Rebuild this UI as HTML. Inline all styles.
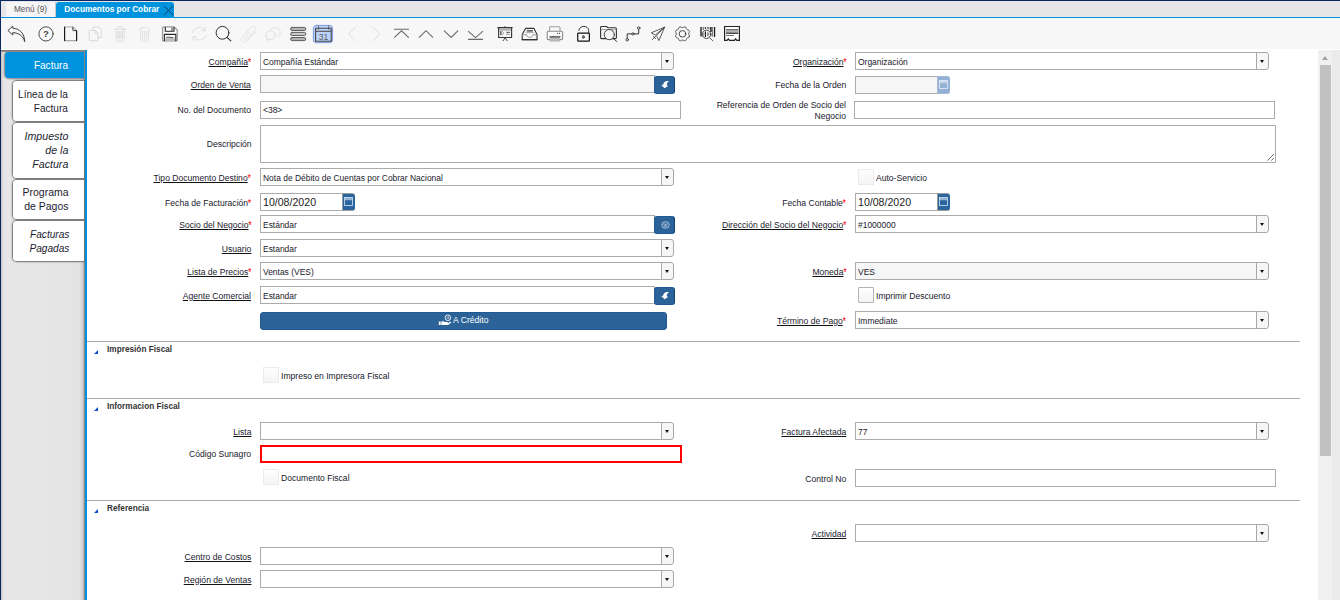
<!DOCTYPE html>
<html>
<head>
<meta charset="utf-8">
<title>Documentos por Cobrar</title>
<style>
*{box-sizing:border-box;margin:0;padding:0}
html,body{width:1340px;height:600px;overflow:hidden;background:#fff}
body{font-family:"Liberation Sans",sans-serif;font-size:9px;color:#333;position:relative}
.abs{position:absolute}
#topline{left:0;top:0;width:1340px;height:1px;background:#0b2763}
#leftline{left:0;top:0;width:1px;height:600px;background:#0b2763}
#tabbar{left:1px;top:1px;width:1339px;height:16px;background:#e6e6e6}
#tabblue{left:1px;top:17px;width:1339px;height:1px;background:#0093dd}
#tab1{left:6px;top:2px;width:50px;height:15px;background:#f5f5f5;border-right:1px solid #c8c8c8;font-size:8.25px;color:#555;text-align:center;line-height:15px}
#tab2{left:56px;top:2px;width:118px;height:16px;background:#0093dd;border-radius:3px 3px 0 0;color:#fff;font-weight:bold;font-size:8.25px;line-height:15px;padding-left:8.3px;white-space:nowrap}
#toolbar{left:1px;top:18px;width:1339px;height:31px;background:#f7f7f7}
#side{left:1px;top:50px;width:84px;height:550px;background:linear-gradient(to right,#bcbcbc 0,#dedede 1.5px,#e7e7e7 4px,#e4e4e4 78px,#d6d6d6 81px,#b0b0b0 83px)}
#sideblue{left:85px;top:50px;width:2px;height:550px;background:#0093dd}
.stab{position:absolute;left:13px;width:71px;background:#fff;border-radius:4px 0 0 4px;font-size:11.5px;color:#1c1c30;text-align:right;line-height:14px;display:flex;align-items:center;justify-content:flex-end;padding-right:16px}
.stab.sh{box-shadow:0 0 1.5px 1px #6c6c6c}
.stab.sel{left:5px;width:79px;background:#0093dd;color:#fff;border-radius:4px 0 0 4px}
.stab.sel.sh{box-shadow:0 0 2px 1px #8a8080}
.stab.it{font-style:italic}
.st{transform:scaleX(0.875);transform-origin:right center;white-space:nowrap}
#content{left:87px;top:50px;width:1231px;height:550px;background:#fff}
#sbtrack{left:1318px;top:50px;width:14px;height:550px;background:#f0f0f0}
#sbright{left:1332px;top:50px;width:8px;height:550px;background:#ebebeb}
#sbthumb{left:1320px;top:65px;width:11px;height:391px;background:#c1c1c1}
#sbarrow{left:1321.7px;top:55.7px;width:0;height:0;border-left:3.8px solid transparent;border-right:3.8px solid transparent;border-bottom:4.3px solid #a0a0a0}
.lbl{position:absolute;text-align:right;white-space:nowrap;color:#20202c;font-size:9.7px;line-height:12px;transform:scaleX(0.886);transform-origin:right center;margin-top:0.6px}
.lbl u{text-decoration:underline;text-underline-offset:1px;text-decoration-thickness:1px;text-decoration-color:#111}
.req{color:#f00;font-size:10px;line-height:9px;position:relative;top:1.4px;margin-left:-0.3px}
.inp{position:absolute;height:18px;border:1px solid #ababab;background:#fff;font-size:9.7px;line-height:16px;padding-left:2px;color:#333;white-space:nowrap;overflow:hidden}
.v{display:inline-block;transform:scaleX(0.872);transform-origin:left center;position:relative;top:0.9px;color:#20202c}
.ro{background:#f6f6f6}
.cbb{position:absolute;width:13px;height:18px;border:1px solid #a8a8a8;border-radius:0 3px 3px 0;background:#f6f6f6}
.cbb:after{content:"";position:absolute;left:2.7px;top:6.8px;border-left:2.8px solid transparent;border-right:2.8px solid transparent;border-top:3.2px solid #111}
.bbtn{position:absolute;background:#2b6399;border-radius:3px;border:1px solid #1f5a94;border-right-color:#0d4478}
.dbtn{position:absolute;width:13px;height:18px;background:#2b659e;border:1px solid #999;border-right:none;border-radius:0 3px 3px 0}
.dv{position:absolute;font-size:11px;line-height:18px;color:#222;white-space:nowrap;transform:scaleX(0.963);transform-origin:left center}
.acr{position:absolute;color:#fff;font-size:9.7px;line-height:12px;white-space:nowrap;transform:scaleX(0.89);transform-origin:left center}
.sep{position:absolute;left:87px;width:1213px;height:1px;background:#a9a9a9}
.sec{position:absolute;left:107px;font-weight:bold;font-size:8.25px;color:#333;line-height:11px;white-space:nowrap}
.tri{position:absolute;left:94px;width:0;height:0;border-left:4px solid transparent;border-bottom:4.5px solid #0a4ad0}
.chk{position:absolute;width:16px;height:16px;border:1px solid #ebebeb;background:linear-gradient(#fefefe,#f4f4f4)}
.chk.en{border-color:#b4b4b4;background:linear-gradient(#fff,#f3f3f3);border-radius:1px}
.ctx{position:absolute;font-size:9.7px;line-height:12px;color:#20202c;white-space:nowrap;transform:scaleX(0.884);transform-origin:left center;margin-top:0.8px}
</style>
</head>
<body>
<div class="abs" id="tabbar"></div>
<div class="abs" id="tabblue"></div>
<div class="abs" id="tab1">Menú (9)</div>
<div class="abs" id="tab2">Documentos por Cobrar</div>
<div class="abs" id="toolbar"></div>
<div class="abs" id="side"></div>
<div class="abs" id="content"></div>
<div class="abs" id="sideblue"></div>
<div class="abs" id="sbtrack"></div>
<div class="abs" id="sbright"></div>
<div class="abs" id="sbthumb"></div>
<div class="abs" id="sbarrow"></div>
<div class="abs" id="topline"></div>
<div class="abs" id="leftline"></div>
<!--SIDETABS-->
<div class="abs" style="left:0;top:50px;width:85px;height:550px;overflow:hidden"><div class="abs" style="left:0;top:-50px">
<div class="abs" style="left:1px;top:50px;width:84px;height:2px;background:linear-gradient(#7c7878,#9a9090)"></div>
<div class="abs" style="left:84px;top:50px;width:1px;height:550px;background:#8a8a8a"></div>
<div class="stab sel sh" style="top:52px;height:26px"></div>
<div class="stab sh" style="top:81px;height:40px"></div>
<div class="stab it sh" style="top:123px;height:54.5px"></div>
<div class="stab sh" style="top:180px;height:38.5px"></div>
<div class="stab it sh" style="top:221px;height:39.8px"></div>
<div class="stab sel" style="top:52px;height:26px;padding-right:16px"><div class="st" style="transform:scaleX(0.875)">Factura</div></div>
<div class="stab" style="top:81px;height:40px;padding-right:16px"><div class="st" style="transform:scaleX(0.875)">Línea de la<br>Factura</div></div>
<div class="stab it" style="top:123px;height:54.5px;padding-right:15.5px"><div class="st" style="transform:scaleX(0.925)">Impuesto<br>de la<br>Factura</div></div>
<div class="stab" style="top:180px;height:38.5px;padding-right:16px"><div class="st" style="transform:scaleX(0.91)">Programa<br>de Pagos</div></div>
<div class="stab it" style="top:221px;height:39.8px;padding-right:14.8px"><div class="st" style="transform:scaleX(0.88)">Facturas<br>Pagadas</div></div>
</div></div>
<!--/SIDETABS-->
<!--FORM-->
<div class="lbl" style="right:1088.7px;top:55px"><u>Compañía</u><span class="req">*</span></div>
<div class="inp" style="left:260px;top:52px;width:402px"><span class="v">Compañía Estándar</span></div>
<div class="cbb" style="left:661px;top:52px"></div>
<div class="lbl" style="right:493.70000000000005px;top:55px"><u>Organización</u><span class="req">*</span></div>
<div class="inp" style="left:855px;top:52px;width:402px"><span class="v">Organización</span></div>
<div class="cbb" style="left:1256px;top:52px"></div>
<div class="lbl" style="right:1088.7px;top:78px"><u>Orden de Venta</u></div>
<div class="inp ro" style="left:260px;top:75px;width:395px;"></div>
<div class="bbtn" style="left:654px;top:76px;width:21px;height:18px"><svg width="9" height="9" viewBox="0 0 9 9" style="position:absolute;left:6px;top:4px"><path d="M8 0.1C5.8 -0.2 3.7 0.4 2.8 1.8C2.3 2.6 2.2 3.2 2.2 3.7L0.2 4.1L3.5 7.3L7.1 4.9L5.8 4.3C5.6 3 6.3 1.4 8 0.1Z" fill="#fff"/></svg></div>
<div class="lbl" style="right:493.70000000000005px;top:78px">Fecha de la Orden</div>
<div class="inp ro" style="left:855px;top:76px;width:83px;"></div>
<div class="dbtn" style="left:937px;top:76px;background:#92b1d5;border-color:#a4b9d2"><svg width="9" height="9" viewBox="0 0 9 9" style="position:absolute;left:1px;top:3px"><rect x="0.45" y="0.5" width="8.1" height="8" fill="none" stroke="#e6eef8" stroke-width="0.8"/><path d="M0.5 1.1H8.500M0.500 2.700H8.500" stroke="#e6eef8" stroke-width="0.7"/><path d="M1 1.800H8" stroke="#e6eef8" stroke-width="0.800" stroke-dasharray="1.300 1"/></svg></div>
<div class="lbl" style="right:1088.7px;top:103.2px">No. del Documento</div>
<div class="inp" style="left:260px;top:101px;width:421px;"><span class="v"><span style="position:relative;top:-0.8px">&lt;38&gt;</span></span></div>
<div class="lbl" style="right:493.70000000000005px;top:98.1px;line-height:11px">Referencia de Orden de Socio del<br>Negocio</div>
<div class="inp" style="left:854px;top:101px;width:421px;"></div>
<div class="lbl" style="right:1088.7px;top:137.1px">Descripción</div>
<div class="inp" style="left:260px;top:125px;width:1016px;height:38px"></div>
<svg class="abs" style="left:1266px;top:153px" width="9" height="9" viewBox="0 0 9 9"><path d="M1.3 7.6L7.7 1.2M5.3 7.6L7.7 5.2" stroke="#3c3c3c" stroke-width="0.8" fill="none"/></svg>
<div class="lbl" style="right:1088.7px;top:171px"><u>Tipo Documento Destino</u><span class="req">*</span></div>
<div class="inp" style="left:260px;top:168px;width:402px"><span class="v">Nota de Débito de Cuentas por Cobrar Nacional</span></div>
<div class="cbb" style="left:661px;top:168px"></div>
<div class="chk" style="left:858px;top:169px"></div>
<div class="ctx" style="left:876px;top:171px">Auto-Servicio</div>
<div class="lbl" style="right:1088.7px;top:196px">Fecha de Facturación<span class="req">*</span></div>
<div class="inp" style="left:260px;top:193px;width:83px;"></div>
<div class="dv" style="left:263px;top:193px">10/08/2020</div>
<div class="dbtn" style="left:342px;top:193px"><svg width="9" height="9" viewBox="0 0 9 9" style="position:absolute;left:1px;top:3px"><rect x="0.45" y="0.5" width="8.1" height="8" fill="none" stroke="#d3e4f6" stroke-width="0.8"/><path d="M0.5 1.1H8.500M0.500 2.700H8.500" stroke="#d3e4f6" stroke-width="0.7"/><path d="M1 1.800H8" stroke="#d3e4f6" stroke-width="0.800" stroke-dasharray="1.300 1"/></svg></div>
<div class="lbl" style="right:493.70000000000005px;top:196px">Fecha Contable<span class="req">*</span></div>
<div class="inp" style="left:855px;top:193px;width:83px;"></div>
<div class="dv" style="left:858px;top:193px">10/08/2020</div>
<div class="dbtn" style="left:937px;top:193px"><svg width="9" height="9" viewBox="0 0 9 9" style="position:absolute;left:1px;top:3px"><rect x="0.45" y="0.5" width="8.1" height="8" fill="none" stroke="#d3e4f6" stroke-width="0.8"/><path d="M0.5 1.1H8.500M0.500 2.700H8.500" stroke="#d3e4f6" stroke-width="0.7"/><path d="M1 1.800H8" stroke="#d3e4f6" stroke-width="0.800" stroke-dasharray="1.300 1"/></svg></div>
<div class="lbl" style="right:1088.7px;top:218px"><u>Socio del Negocio</u><span class="req">*</span></div>
<div class="inp" style="left:260px;top:215px;width:395px;"><span class="v">Estándar</span></div>
<div class="bbtn" style="left:654px;top:216px;width:21px;height:18px"><svg width="9" height="8" viewBox="0 0 9 8" style="position:absolute;left:5.5px;top:3.5px"><ellipse cx="4.5" cy="4" rx="3.7" ry="3.3" fill="none" stroke="#b9cee6" stroke-width="0.9"/><path d="M3.1 2.4v2a1.4 1.3 0 0 0 2.8 0V2.4M4.5 2.5v2.6" fill="none" stroke="#b9cee6" stroke-width="0.8"/></svg></div>
<div class="lbl" style="right:493.70000000000005px;top:218px"><u>Dirección del Socio del Negocio</u><span class="req">*</span></div>
<div class="inp" style="left:855px;top:215px;width:402px"><span class="v">#1000000</span></div>
<div class="cbb" style="left:1256px;top:215px"></div>
<div class="lbl" style="right:1088.7px;top:242px"><u>Usuario</u></div>
<div class="inp" style="left:260px;top:239px;width:402px"><span class="v">Estandar</span></div>
<div class="cbb" style="left:661px;top:239px"></div>
<div class="lbl" style="right:1088.7px;top:265px"><u>Lista de Precios</u><span class="req">*</span></div>
<div class="inp" style="left:260px;top:262px;width:402px"><span class="v">Ventas (VES)</span></div>
<div class="cbb" style="left:661px;top:262px"></div>
<div class="lbl" style="right:493.70000000000005px;top:265px"><u>Moneda</u><span class="req">*</span></div>
<div class="inp ro" style="left:855px;top:262px;width:402px"><span class="v">VES</span></div>
<div class="cbb" style="left:1256px;top:262px"></div>
<div class="lbl" style="right:1088.7px;top:289px"><u>Agente Comercial</u></div>
<div class="inp" style="left:260px;top:286px;width:395px;"><span class="v">Estandar</span></div>
<div class="bbtn" style="left:654px;top:287px;width:21px;height:18px"><svg width="9" height="9" viewBox="0 0 9 9" style="position:absolute;left:6px;top:4px"><path d="M8 0.1C5.8 -0.2 3.7 0.4 2.8 1.8C2.3 2.6 2.2 3.2 2.2 3.7L0.2 4.1L3.5 7.3L7.1 4.9L5.8 4.3C5.6 3 6.3 1.4 8 0.1Z" fill="#fff"/></svg></div>
<div class="chk en" style="left:858px;top:287px"></div>
<div class="ctx" style="left:876px;top:289px">Imprimir Descuento</div>
<div class="bbtn" style="left:260px;top:312px;width:407px;height:18px;border:1px solid #1f5a94"></div>
<div class="acr" style="left:453px;top:314.2px">A Crédito</div>
<svg class="abs" style="left:438px;top:314px" width="14" height="12" viewBox="0 0 14 12"><circle cx="9.9" cy="3.8" r="2.8" fill="none" stroke="#fff" stroke-width="0.85"/><path d="M9.2 2.500v2.600M10.100 2.500c1 0 1 1.200 0 1.200c1 0 1 1.400 0 1.400" stroke="#fff" stroke-width="0.55" fill="none"/><path d="M0.800 7.400h1.900v3.600H0.800zM3.300 7.800C4.700 7.100 6 7.300 7 7.900H9.300C10 7.900 10 9.100 9.300 9.100H7.400L10 9.100L12.200 7.800C12.900 7.500 13.500 8.300 12.900 8.800L10 10.900H3.300Z" fill="#fff"/></svg>
<div class="lbl" style="right:493.70000000000005px;top:314px"><u>Término de Pago</u><span class="req">*</span></div>
<div class="inp" style="left:855px;top:311px;width:402px"><span class="v">Immediate</span></div>
<div class="cbb" style="left:1256px;top:311px"></div>
<div class="sep" style="top:341px"></div>
<div class="tri" style="top:349.5px"></div>
<div class="sec" style="top:344px">Impresión Fiscal</div>
<div class="chk" style="left:263px;top:367px"></div>
<div class="ctx" style="left:281px;top:369px">Impreso en Impresora Fiscal</div>
<div class="sep" style="top:398px"></div>
<div class="tri" style="top:406.5px"></div>
<div class="sec" style="top:401px">Informacion Fiscal</div>
<div class="lbl" style="right:1088.7px;top:425px"><u>Lista</u></div>
<div class="inp" style="left:260px;top:422px;width:402px"></div>
<div class="cbb" style="left:661px;top:422px"></div>
<div class="lbl" style="right:493.70000000000005px;top:425px"><u>Factura Afectada</u></div>
<div class="inp" style="left:855px;top:422px;width:402px"><span class="v">77</span></div>
<div class="cbb" style="left:1256px;top:422px"></div>
<div class="lbl" style="right:1088.7px;top:447.2px">Código Sunagro</div>
<div class="inp" style="left:260px;top:445px;width:422px;border:2px solid #f00"></div>
<div class="chk" style="left:263px;top:469px"></div>
<div class="ctx" style="left:281px;top:471px">Documento Fiscal</div>
<div class="lbl" style="right:493.70000000000005px;top:472px">Control No</div>
<div class="inp" style="left:855px;top:469px;width:421px;"></div>
<div class="sep" style="top:500px"></div>
<div class="tri" style="top:508.5px"></div>
<div class="sec" style="top:503px">Referencia</div>
<div class="lbl" style="right:493.70000000000005px;top:527px"><u>Actividad</u></div>
<div class="inp" style="left:855px;top:524px;width:402px"></div>
<div class="cbb" style="left:1256px;top:524px"></div>
<div class="lbl" style="right:1088.7px;top:550px"><u>Centro de Costos</u></div>
<div class="inp" style="left:260px;top:547px;width:402px"></div>
<div class="cbb" style="left:661px;top:547px"></div>
<div class="lbl" style="right:1088.7px;top:573px"><u>Región de Ventas</u></div>
<div class="inp" style="left:260px;top:570px;width:402px"></div>
<div class="cbb" style="left:661px;top:570px"></div>
<!--/FORM-->
<!--ICONS-->
<svg class="abs" style="left:0;top:0" width="760" height="50" viewBox="0 0 760 50" fill="none" stroke-linecap="round" stroke-linejoin="round">
<!-- tab close X -->
<path d="M164.3 6.2L172.8 14.8M172.8 6.2L164.3 14.8" stroke="#0b3a5e" stroke-width="0.9"/>
<!-- undo -->
<path d="M8.2 30.2L12.8 26.1V28.2C19.6 28.6 24.6 33.4 24.7 41.6C23 36 19 33 12.8 32.6V34.6Z" stroke="#2a2a2a" stroke-width="0.9"/>
<!-- help -->
<circle cx="46" cy="33.9" r="7.1" stroke="#3a3a3a" stroke-width="0.9"/>
<text x="46" y="37.200" font-family="Liberation Sans, sans-serif" font-size="9.500" font-weight="bold" fill="#444" stroke="none" text-anchor="middle">?</text>
<!-- new doc -->
<path d="M64.6 27H72.6L76.6 30.8V40.6H64.6Z" stroke="#a8a8a8" stroke-width="1.100"/>
<path d="M64.6 27V40.6M76.6 30.8V40.6" stroke="#111" stroke-width="1.1"/>
<path d="M72.800 27.200V30.200C72.800 30.500 73 30.600 73.300 30.600H76.400" stroke="#333" stroke-width="0.900"/>
<!-- copy (disabled) -->
<g stroke="#d6d6d6" stroke-width="0.9">
<path d="M89.6 30.4H95.4L98 33V40.6H89.6Z"/>
<path d="M95.2 30.6V33H97.8"/>
<path d="M93 30.2V27H99L101.4 29.4V37.4H98.2"/>
</g>
<!-- trash 1 (disabled) -->
<g stroke="#dadada" stroke-width="0.9">
<path d="M114.8 29.2H125.4M117.6 29V27.2C118.6 26.2 121.6 26.2 122.6 27.2V29"/>
<path d="M115.6 29.4L116.4 40C116.6 41 117.2 41.2 118 41.2H122.2C123 41.2 123.6 41 123.8 40L124.6 29.4"/>
<path d="M117.8 31.4V38.8M119.4 31.4V38.8M120.9 31.4V38.8M122.4 31.4V38.8"/>
</g>
<!-- trash 2 (disabled) -->
<g stroke="#dedede" stroke-width="0.9">
<path d="M139.8 29.2C141 26.4 148.6 26.4 149.6 29.2"/>
<path d="M140.2 29.4L141 40C141.2 41 141.8 41.2 142.6 41.2H146.8C147.6 41.2 148.2 41 148.4 40L149.2 29.4"/>
<path d="M142.6 31V39M144.7 31V39M146.8 31V39"/>
</g>
<!-- save -->
<path d="M162.6 28C162.6 27.2 163.2 26.9 163.8 26.9H174L177.2 30V40C177.2 40.6 176.8 40.9 176.2 40.9H163.8C163 40.9 162.6 40.5 162.6 40Z" fill="#fff" stroke="#9a9a9a" stroke-width="1.3"/>
<path d="M165.3 27.4V31.2H174V27.4" stroke="#222" stroke-width="1.1"/>
<path d="M172 28V30.4" stroke="#222" stroke-width="0.9"/>
<rect x="165.4" y="37.6" width="9.6" height="3.3" fill="#bdbdbd" stroke="none"/>
<path d="M164.4 40.7V34.4H175.8V40.7" stroke="#222" stroke-width="1.1"/>
<path d="M166.6 37.2H170M170.6 37.5H172.8" stroke="#333" stroke-width="0.8"/>
<!-- refresh (disabled) -->
<g stroke="#dcdcdc" stroke-width="0.9">
<path d="M192.4 32.6C193.6 26.6 202.6 25.6 205 30.6M205.4 27.4V30.8H202"/>
<path d="M206 35C204.8 41 195.8 42 193.4 37M193 40.2V36.8H196.4"/>
</g>
<!-- search -->
<circle cx="222.5" cy="32.8" r="6.4" stroke="#333" stroke-width="1"/>
<path d="M227 37.4L230.8 40.9" stroke="#333" stroke-width="1.1"/>
<!-- paperclip (disabled) -->
<g stroke="#dedede" stroke-width="0.9">
<path d="M256 32L246.800 41C243.800 43.600 239.400 40.200 242 37L251.400 27.400C253.800 25 257.400 27.600 255.400 30.200L246.600 39C245.400 40.200 243.600 38.800 244.800 37.400L250.200 31.600"/>
</g>
<!-- chat (disabled) -->
<g stroke="#dcdcdc" stroke-width="0.9">
<ellipse cx="270.6" cy="35.2" rx="4.9" ry="4.4" fill="#f6f6f6"/>
<path d="M267.400 38.600L266.800 40.600L269 39.400"/>
<path d="M270.400 30C272.800 25.400 281.400 27.400 280.200 33.400C279.800 34.800 279 35.600 278 36.200L278.400 36.900"/>
</g>
<!-- menu bars -->
<g stroke="#505050" stroke-width="0.9">
<rect x="290.600" y="27.400" width="15.200" height="3.100" rx="1.550" fill="#b4b4b4"/>
<rect x="290.600" y="32.400" width="15.200" height="3.100" rx="1.550" fill="#cacaca"/>
<rect x="290.600" y="37.500" width="15.200" height="3.100" rx="1.550" fill="#b4b4b4"/>
</g>
<!-- calendar toggle -->
<rect x="313.400" y="25.400" width="19.200" height="17.300" rx="3" fill="#bcd4fa" stroke="#7c98e4" stroke-width="1"/>
<path d="M315.600 28.200H331.200V41.200H315.600ZM315.600 31.200H331.200" stroke="#444" stroke-width="1.100"/><path d="M318.500 26.100V29.400M328.600 26.100V29.400" stroke="#444" stroke-width="0.700"/>
<text x="323.5" y="40" font-family="Liberation Sans, sans-serif" font-size="8.6" fill="#5a5a5a" stroke="none" text-anchor="middle">31</text>
<!-- prev / next (disabled) -->
<path d="M355.400 27.200L348.800 33.900L355.400 40.900M373.100 27.200L379.700 33.900L373.100 40.900" stroke="#d9d9d9" stroke-width="0.9"/>
<!-- first/up/down/last -->
<g stroke="#6a6a6a" stroke-width="1.100" stroke-linecap="butt" stroke-linejoin="miter">
<path d="M394 29.300H409M394.200 37.600L401.500 30.800L408.800 37.600"/>
<path d="M418.900 37.600L426 30.700L433.100 37.600"/>
<path d="M444 30.700L451.100 37.400L458.100 30.700"/>
<path d="M468.100 31.200L475.500 37.600L483 31.200M468 39.400H483"/>
</g>
<!-- presentation board -->
<rect x="498.800" y="28.700" width="12.500" height="2" fill="#b0b0b0" stroke="none"/>
<path d="M497.800 27.600H512.200" stroke="#333" stroke-width="1.200"/>
<path d="M498.600 28V37.500H511.600V28" stroke="#333" stroke-width="1.100"/>
<path d="M505.100 37.800L503.100 40.700M505.100 37.800L507.100 40.700M505 26.600V27.400" stroke="#333" stroke-width="0.9"/>
<path d="M500.600 31.600V34.600M502 31.400C504.200 31.400 504.200 35 502 35ZM506.400 32.200H509.400M506.400 34.400H509.400" stroke="#999" stroke-width="0.9"/>
<path d="M500.600 31.600V34.600M507 32.600H509.400" stroke="#444" stroke-width="0.8"/>
<!-- inbox tray -->
<path d="M525.500 28.400H534L537 34.600V39.600H522.200V34.600Z" stroke="#333" stroke-width="1.100"/>
<path d="M522.400 34.800H526.600C526.600 38.200 532.800 38.200 532.800 34.800H537" stroke="#999" stroke-width="1"/>
<path d="M527.200 30.800H532.400" stroke="#333" stroke-width="1.300"/>
<path d="M526.200 32.600H533.400" stroke="#aaa" stroke-width="1"/>
<path d="M522.200 39.600H537" stroke="#333" stroke-width="1.200"/>
<!-- printer -->
<path d="M549.600 31V27.400C549.600 26.900 550 26.700 550.400 26.700H559C559.600 26.700 560 27 560 27.400V31" stroke="#a0a0a0" stroke-width="1.100"/>
<rect x="547.200" y="31.200" width="15.400" height="8.400" rx="1.400" stroke="#8a8a8a" stroke-width="1.100" fill="#fafafa"/>
<rect x="550.200" y="37.600" width="9.400" height="3.600" fill="#bcbcbc" stroke="#aaa" stroke-width="0.600"/>
<path d="M550 36.800H560" stroke="#444" stroke-width="1.300"/>
<circle cx="557.400" cy="33.400" r="0.550" fill="#444"/><circle cx="559.500" cy="33.400" r="0.550" fill="#444"/>
<!-- lock open -->
<rect x="577.700" y="33.200" width="11.700" height="8" rx="0.800" stroke="#111" stroke-width="1.200"/>
<path d="M578.800 30.400C579.400 25 588.200 25 588.700 30.400V32.800" stroke="#333" stroke-width="1"/>
<ellipse cx="583.400" cy="37" rx="1" ry="1.400" stroke="#444" stroke-width="0.800" fill="#888"/>
<!-- folder search -->
<path d="M600.600 27.400C600.600 26.800 601 26.500 601.600 26.500H606.600L607.800 27.700H615.400C616 27.700 616.400 28.100 616.400 28.700V37.600C616.400 38.200 616 38.600 615.400 38.600H601.600C601 38.600 600.600 38.200 600.600 37.600Z" stroke="#333" stroke-width="1.100"/>
<path d="M601.200 29.600H616" stroke="#999" stroke-width="0.900"/>
<circle cx="609.300" cy="34.600" r="5.100" fill="#f6f6f6" stroke="#444" stroke-width="1"/>
<path d="M613.200 38.500L616.800 41.500" stroke="#444" stroke-width="1"/>
<!-- workflow -->
<path d="M627.200 38.200V33.900H638.700V29.800" stroke="#333" stroke-width="1"/>
<circle cx="627.200" cy="39.700" r="1.250" fill="#f6f6f6" stroke="#333" stroke-width="0.900"/>
<circle cx="632.900" cy="33.900" r="1.150" fill="#f6f6f6" stroke="#333" stroke-width="0.900"/>
<circle cx="638.700" cy="28.100" r="1.250" fill="#f6f6f6" stroke="#333" stroke-width="0.900"/>
<!-- paper plane -->
<path d="M664.600 27.200L651.200 32.800L655.300 35L664.600 27.200L658.900 40.600L657 36.600M664.600 27.200L652.200 39.700M653.200 36.400L655.600 38.600" stroke="#333" stroke-width="0.800"/>
<!-- gear -->
<circle cx="682.500" cy="33.850" r="3.300" stroke="#444" stroke-width="1"/>
<path d="M689.24 36.64 L689.14 36.88 L689.03 37.11 L688.89 37.32 L688.62 37.46 L688.34 37.57 L688.04 37.66 L687.76 37.74 L687.48 37.81 L687.29 37.94 L687.14 38.11 L686.99 38.27 L686.84 38.42 L686.67 38.57 L686.51 38.71 L686.43 38.97 L686.35 39.25 L686.27 39.54 L686.17 39.83 L686.04 40.11 L685.87 40.33 L685.64 40.44 L685.41 40.54 L685.18 40.64 L684.94 40.73 L684.70 40.81 L684.42 40.78 L684.14 40.67 L683.86 40.54 L683.59 40.39 L683.34 40.24 L683.10 40.12 L682.88 40.14 L682.66 40.15 L682.45 40.15 L682.23 40.14 L682.01 40.13 L681.78 40.18 L681.53 40.32 L681.27 40.46 L681.00 40.61 L680.72 40.73 L680.44 40.82 L680.18 40.77 L679.94 40.69 L679.71 40.59 L679.47 40.49 L679.24 40.38 L679.03 40.24 L678.89 39.97 L678.78 39.69 L678.69 39.39 L678.61 39.11 L678.54 38.83 L678.41 38.64 L678.24 38.49 L678.08 38.34 L677.93 38.19 L677.78 38.02 L677.64 37.86 L677.38 37.78 L677.10 37.70 L676.81 37.62 L676.52 37.52 L676.24 37.39 L676.02 37.22 L675.91 36.99 L675.81 36.76 L675.71 36.53 L675.62 36.29 L675.54 36.05 L675.57 35.77 L675.68 35.49 L675.81 35.21 L675.96 34.94 L676.11 34.69 L676.23 34.45 L676.21 34.23 L676.20 34.01 L676.20 33.80 L676.21 33.58 L676.22 33.36 L676.17 33.13 L676.03 32.88 L675.89 32.62 L675.74 32.35 L675.62 32.07 L675.53 31.79 L675.58 31.53 L675.66 31.29 L675.76 31.06 L675.86 30.82 L675.97 30.59 L676.11 30.38 L676.38 30.24 L676.66 30.13 L676.96 30.04 L677.24 29.96 L677.52 29.89 L677.71 29.76 L677.86 29.59 L678.01 29.43 L678.16 29.28 L678.33 29.13 L678.49 28.99 L678.57 28.73 L678.65 28.45 L678.73 28.16 L678.83 27.87 L678.96 27.59 L679.13 27.37 L679.36 27.26 L679.59 27.16 L679.82 27.06 L680.06 26.97 L680.30 26.89 L680.58 26.92 L680.86 27.03 L681.14 27.16 L681.41 27.31 L681.66 27.46 L681.90 27.58 L682.12 27.56 L682.34 27.55 L682.55 27.55 L682.77 27.56 L682.99 27.57 L683.22 27.52 L683.47 27.38 L683.73 27.24 L684.00 27.09 L684.28 26.97 L684.56 26.88 L684.82 26.93 L685.06 27.01 L685.29 27.11 L685.53 27.21 L685.76 27.32 L685.97 27.46 L686.11 27.73 L686.22 28.01 L686.31 28.31 L686.39 28.59 L686.46 28.87 L686.59 29.06 L686.76 29.21 L686.92 29.36 L687.07 29.51 L687.22 29.68 L687.36 29.84 L687.62 29.92 L687.90 30.00 L688.19 30.08 L688.48 30.18 L688.76 30.31 L688.98 30.48 L689.09 30.71 L689.19 30.94 L689.29 31.17 L689.38 31.41 L689.46 31.65 L689.43 31.93 L689.32 32.21 L689.19 32.49 L689.04 32.76 L688.89 33.01 L688.77 33.25 L688.79 33.47 L688.80 33.69 L688.80 33.90 L688.79 34.12 L688.78 34.34 L688.83 34.57 L688.97 34.82 L689.11 35.08 L689.26 35.35 L689.38 35.63 L689.47 35.91 L689.42 36.17 L689.34 36.41Z" stroke="#444" stroke-width="1"/>
<!-- barcode search -->
<g stroke="#222" stroke-linecap="butt">
<path d="M701 27V36.600" stroke-width="1.400"/><path d="M703.200 27V30" stroke-width="0.800"/><path d="M705.300 27V29" stroke-width="1"/><path d="M707.400 27V28.600" stroke-width="0.700"/><path d="M708.800 27V29.200" stroke-width="0.800"/><path d="M710.900 27V32" stroke-width="1.600"/><path d="M712.700 27V36.600" stroke-width="0.700"/><path d="M714.600 26.900V36.900" stroke-width="1.200"/>
<path d="M711.800 33V36.400" stroke-width="0.800" stroke="#777"/>
</g>
<circle cx="706.500" cy="34.300" r="4.200" fill="#f6f6f6" stroke="#333" stroke-width="0.900"/>
<path d="M705.400 31.600V37" stroke="#222" stroke-width="1.200" stroke-linecap="butt"/>
<path d="M707.200 31.600L709.600 34.300L707.200 37Z" fill="#888" stroke="none"/>
<path d="M703.600 33V35.600" stroke="#888" stroke-width="0.800"/>
<path d="M709.700 37.700L712.800 40.900" stroke="#444" stroke-width="0.900"/>
<!-- receipt -->
<path d="M724.600 26.500H739.400V40.400H736.900L735.600 39L734.300 40.400H729.600L728.300 39L727 40.400H724.600Z" fill="#fff" stroke="#222" stroke-width="1.200" stroke-linejoin="miter"/>
<path d="M726.400 29.500H737.800M726.400 30.900H737.800M726.400 32.300H737.800" stroke="#6e6e6e" stroke-width="1"/>
<path d="M726.400 33.500H737.800" stroke="#333" stroke-width="0.900"/>
<path d="M726.400 35.500H733.600" stroke="#555" stroke-width="0.800"/>
</svg>

<!--/ICONS-->
</body>
</html>
